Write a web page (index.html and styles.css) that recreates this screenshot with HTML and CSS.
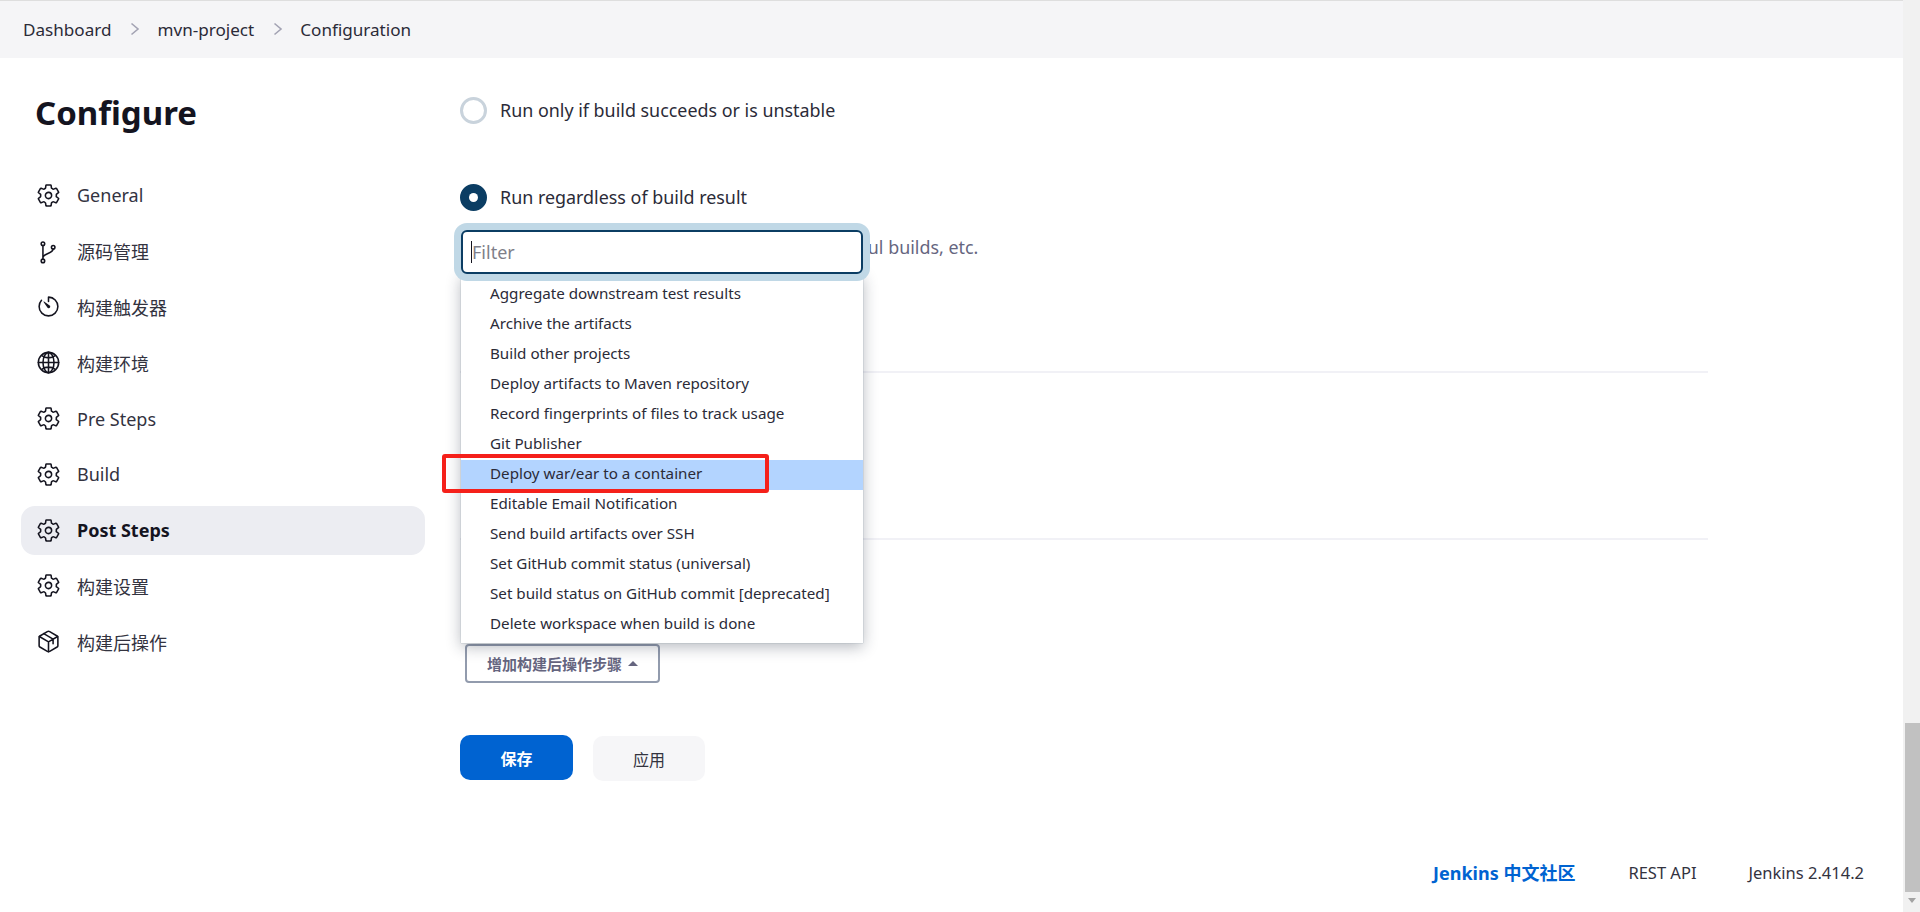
FILE: index.html
```html
<!DOCTYPE html>
<html lang="zh">
<head>
<meta charset="utf-8">
<title>Configure</title>
<link rel="stylesheet" href="styles.css">
</head>
<body>
<svg class="defs" width="0" height="0" aria-hidden="true">
  <symbol id="gear" viewBox="0 0 512 512"><path class="st" d="M262.29 192.31a64 64 0 1057.4 57.4 64.13 64.13 0 00-57.4-57.4zM416.39 256a154.34 154.34 0 01-1.53 20.79l45.21 35.46a10.81 10.81 0 012.45 13.75l-42.77 74a10.81 10.81 0 01-13.14 4.59l-44.9-18.08a16.11 16.11 0 00-15.17 1.75A164.48 164.48 0 01325 400.8a15.94 15.94 0 00-8.82 12.14l-6.73 47.89a11.08 11.08 0 01-10.68 9.17h-85.54a11.11 11.11 0 01-10.69-8.87l-6.72-47.82a16.07 16.07 0 00-9-12.22 155.3 155.3 0 01-21.46-12.57 16 16 0 00-15.11-1.71l-44.89 18.07a10.81 10.81 0 01-13.14-4.58l-42.77-74a10.8 10.8 0 012.45-13.75l38.21-30a16.05 16.05 0 006-14.08c-.36-4.17-.58-8.33-.58-12.5s.21-8.27.58-12.35a16 16 0 00-6.07-13.94l-38.19-30A10.81 10.81 0 0149.48 186l42.77-74a10.81 10.81 0 0113.14-4.59l44.9 18.08a16.11 16.11 0 0015.17-1.75A164.48 164.48 0 01187 111.2a15.94 15.94 0 008.82-12.14l6.73-47.89A11.08 11.08 0 01213.23 42h85.54a11.11 11.11 0 0110.69 8.87l6.72 47.82a16.07 16.07 0 009 12.22 155.3 155.3 0 0121.46 12.57 16 16 0 0015.11 1.71l44.89-18.07a10.81 10.81 0 0113.14 4.58l42.77 74a10.8 10.8 0 01-2.45 13.75l-38.21 30a16.05 16.05 0 00-6.05 14.08c.33 4.14.55 8.3.55 12.47z"/></symbol>
  <symbol id="branch" viewBox="0 0 512 512"><circle class="st" cx="142" cy="96" r="36"/><circle class="st" cx="142" cy="448" r="36"/><circle class="st" cx="352" cy="170" r="36"/><path class="st" d="M142 132v280M352 206c0 90-210 90-210 176"/></symbol>
  <symbol id="timer" viewBox="0 0 512 512"><path class="st" d="M112.91 128A191.85 191.85 0 0064 254c-1.18 106.35 85.65 193.8 192 194 106.2.2 192-85.83 192-192 0-104.54-83.55-189.61-187.5-192a4.36 4.36 0 00-4.5 4.37V152"/><path class="fl" d="M233.38 278.63l-79-113a8.13 8.13 0 0111.32-11.32l113 79a32.5 32.5 0 01-37.25 53.26 33.21 33.21 0 01-8.07-7.94z"/></symbol>
  <symbol id="globe" viewBox="0 0 512 512"><path class="st" d="M256 48C141.13 48 48 141.13 48 256s93.13 208 208 208 208-93.13 208-208S370.87 48 256 48z"/><path class="st" d="M256 48c-58.07 0-112.67 93.31-112.67 208S197.93 464 256 464s112.67-93.31 112.67-208S314.07 48 256 48z"/><path class="st" d="M117.33 117.33c38.24 27.15 86.38 43.34 138.67 43.34s100.43-16.19 138.67-43.34M394.67 394.67c-38.24-27.15-86.38-43.34-138.67-43.34s-100.43 16.19-138.67 43.34M256 48v416M464 256H48"/></symbol>
  <symbol id="cube" viewBox="0 0 512 512"><path class="st" d="M448 341.37V170.61A32 32 0 00432.11 143l-152-88.46a47.94 47.94 0 00-48.24 0L79.89 143A32 32 0 0064 170.61v170.76A32 32 0 0079.89 369l152 88.46a48 48 0 0048.24 0l152-88.46A32 32 0 00448 341.37z"/><path class="st" d="M69 154l187 110 187-110M256 464V264M160 96l190 112v92"/></symbol>
</svg>

<div class="app">
  <div class="page">
    <nav class="crumbs">
      <a class="crumb">Dashboard</a>
      <svg class="chev" viewBox="0 0 10 14"><path d="M1.5 1.5L8 7l-6.500 5.500"/></svg>
      <a class="crumb">mvn-project</a>
      <svg class="chev" viewBox="0 0 10 14"><path d="M1.500 1.500L8 7l-6.500 5.500"/></svg>
      <a class="crumb">Configuration</a>
    </nav>

    <div class="body">
      <aside class="side">
        <h1 class="title">Configure</h1>
        <ul class="menu">
          <li class="item"><svg class="ico"><use href="#gear"/></svg>General</li>
          <li class="item"><svg class="ico"><use href="#branch"/></svg>源码管理</li>
          <li class="item"><svg class="ico"><use href="#timer"/></svg>构建触发器</li>
          <li class="item"><svg class="ico"><use href="#globe"/></svg>构建环境</li>
          <li class="item"><svg class="ico"><use href="#gear"/></svg>Pre Steps</li>
          <li class="item"><svg class="ico"><use href="#gear"/></svg>Build</li>
          <li class="item active"><svg class="ico"><use href="#gear"/></svg>Post Steps</li>
          <li class="item"><svg class="ico"><use href="#gear"/></svg>构建设置</li>
          <li class="item"><svg class="ico"><use href="#cube"/></svg>构建后操作</li>
        </ul>
      </aside>

      <main class="main">
        <label class="radio-row first"><span class="radio"></span>Run only if build succeeds or is unstable</label>
        <label class="radio-row second"><span class="radio on"></span>Run regardless of build result</label>
        <p class="hint">Should the post-build steps run only for successful builds, etc.</p>
        <hr class="rule rule-a">
        <hr class="rule rule-b">
        <button class="add">增加构建后操作步骤<span class="caret"></span></button>
        <div class="actions">
          <button class="save">保存</button>
          <button class="apply">应用</button>
        </div>

        <div class="popup">
          <div class="filter"><span class="cursor"></span><span class="placeholder">Filter</span></div>
          <ul class="list">
            <li>Aggregate downstream test results</li>
            <li>Archive the artifacts</li>
            <li>Build other projects</li>
            <li>Deploy artifacts to Maven repository</li>
            <li>Record fingerprints of files to track usage</li>
            <li>Git Publisher</li>
            <li class="sel">Deploy war/ear to a container</li>
            <li>Editable Email Notification</li>
            <li>Send build artifacts over SSH</li>
            <li>Set GitHub commit status (universal)</li>
            <li>Set build status on GitHub commit [deprecated]</li>
            <li>Delete workspace when build is done</li>
          </ul>
        </div>
        <div class="redbox"></div>
      </main>
    </div>

    <footer class="foot">
      <a class="foot-link">Jenkins 中文社区</a>
      <a class="foot-api">REST API</a>
      <a class="foot-ver">Jenkins 2.414.2</a>
    </footer>
  </div>

  <div class="scrollbar">
    <div class="track"><div class="thumb"></div></div>
    <span class="arrow"></span>
  </div>
</div>
</body>
</html>
```

FILE: styles.css
```css
* { box-sizing: border-box; }
html, body { margin: 0; height: 100%; overflow: hidden; background: #fff; }
body {
  font-family: "Noto Sans", "Noto Sans CJK SC", sans-serif;
  color: #14141f;
  font-size: 16px;
}
.defs { position: absolute; }
.st { fill: none; stroke: currentColor; stroke-width: 32; stroke-linecap: round; stroke-linejoin: round; }
.fl { fill: currentColor; }

.app { display: flex; height: 912px; }
.page { flex: 1; min-width: 0; display: flex; flex-direction: column; }

.crumbs {
  height: 58px; display: flex; align-items: center;
  background: #f5f5f7; border-top: 1px solid #dedede;
  padding: 0 0 1px 23px;
}
.crumb { font-size: 17.1px; color: #2b2b38; }
.chev { width: 10px; height: 14px; margin: 0 17.5px 0 18.5px; flex: none; }
.chev path { fill: none; stroke: #a3a3b3; stroke-width: 1.6; }

.body { flex: 1; display: flex; min-height: 0; }

.side { width: 460px; flex: none; padding: 0 0 0 21px; }
.title { margin: 32px 0 35px 14px; font-size: 33px; line-height: 46px; font-weight: 700; color: #14141f; }
.menu { list-style: none; margin: 0; padding: 0; width: 404px; display: flex; flex-direction: column; gap: 7px; }
.item {
  height: 48.8px; display: flex; align-items: center; gap: 16px;
  padding-left: 15px; border-radius: 14px;
  font-size: 18px; color: #33333f;
}
.item.active { background: #ecedf2; font-weight: 700; color: #14141f; }
.ico { width: 25px; height: 25px; flex: none; color: #14141f; }

.main { flex: 1; position: relative; padding-right: 195px; }

.radio-row { display: flex; align-items: center; gap: 13px; height: 30px; font-size: 17.9px; color: #2b2b38; }
.radio-row.first { margin-top: 37px; }
.radio-row.second { margin-top: 57px; }
.radio { width: 27px; height: 27px; border-radius: 50%; border: 3px solid #c9d3dc; background: #fff; flex: none; }
.radio.on { background: #0b3d63; border: 9px solid #0b3d63; position: relative; }
.radio.on::after { content: ""; position: absolute; inset: 0; border-radius: 50%; background: #fff; }

.hint { margin: 23px 0 0; font-size: 17.9px; line-height: 24px; color: #66667f; }

.rule { border: 0; height: 2px; background: #f1f1f6; margin: 0; }
.rule-a { margin-top: 112px; }
.rule-b { margin-top: 165px; }

.add {
  display: flex; align-items: center; gap: 6px;
  margin: 104px 0 0 5px; width: 195px; height: 39px; justify-content: center;
  background: #fff; border: 2px solid #929bad; border-radius: 4px;
  font: 700 15px "Noto Sans", "Noto Sans CJK SC", sans-serif; color: #65657f;
}
.caret { width: 0; height: 0; border-left: 5px solid transparent; border-right: 5px solid transparent; border-bottom: 5px solid #65657f; }

.actions { display: flex; gap: 20px; margin-top: 52px; align-items: flex-start; }
.save, .apply {
  width: 113px; height: 45px; border: 0; border-radius: 10px;
  font: 16px "Noto Sans", "Noto Sans CJK SC", sans-serif;
}
.save { background: #0063d1; color: #fff; font-weight: 700; }
.apply { background: #f6f6f8; color: #33333f; margin-top: 1px; width: 112px; }

.popup { position: absolute; left: 1px; top: 172px; width: 402px; }
.filter {
  position: relative; z-index: 2; height: 44px; background: #fff;
  border: 2px solid #0b3d63; border-radius: 6px;
  box-shadow: 0 0 0 7px #c0d8e6;
  display: flex; align-items: center; padding-left: 8px;
  font-size: 18px;
}
.cursor { width: 1px; height: 22px; background: #14141f; }
.placeholder { color: #7f7f8a; }
.list {
  position: relative; z-index: 1; list-style: none; margin: 0; padding: 6px 0 3px;
  background: #fff; box-shadow: 0 0 1px #8a99a8, 0 4px 14px rgba(30, 40, 60, .32);
}
.list li { height: 30px; padding: 0 0 4px 29px; display: flex; align-items: center; font-size: 15.2px; color: #2b2b38; white-space: nowrap; }
.list li.sel { background: #b3d4ff; }

.redbox {
  position: absolute; z-index: 3; left: -18px; top: 396px; width: 327px; height: 39px;
  border: 4px solid #f5201a; border-radius: 3px;
}

.foot { position: absolute; left: 0; right: 17px; bottom: 27px; display: flex; justify-content: flex-end; align-items: center; padding-right: 39px; font-size: 16.5px; color: #33333f; }
.foot-link { color: #0063d1; font-weight: 700; font-size: 18px; margin-right: 53px; }
.foot-api { margin-right: 52px; }

.scrollbar { width: 17px; flex: none; background: #f1f1f1; display: flex; flex-direction: column; align-items: center; }
.track { flex: 1; width: 100%; padding: 723px 0 0 2px; }
.thumb { width: 15px; height: 169px; background: #c1c1c1; }
.arrow { width: 0; height: 0; margin-bottom: 9px; border-left: 4.500px solid transparent; border-right: 4.500px solid transparent; border-top: 5px solid #a3a3a3; }
```
